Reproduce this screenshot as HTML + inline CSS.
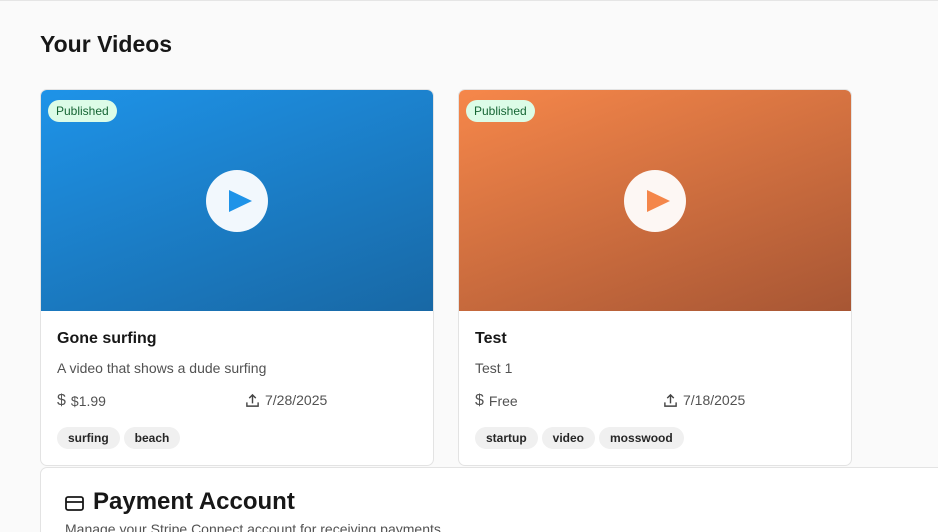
<!DOCTYPE html><html><head><style>
*{box-sizing:border-box;margin:0;padding:0}
html,body{width:938px;height:532px;overflow:hidden}
body{background:#fafafa;font-family:"Liberation Sans",sans-serif;color:#171717;position:relative}
.top{position:absolute;left:0;top:0;width:938px;height:1px;background:#e5e5e5}
h1{position:absolute;left:40px;top:31px;font-size:23px;font-weight:600}
.card{position:absolute;top:89px;width:394px;height:377px;background:#fff;border:1px solid #e3e3e3;border-radius:7px;overflow:hidden}
.thumb{height:221px;position:relative}
.badge{position:absolute;left:7px;top:10px;background:#dcfce7;color:#166534;font-size:12px;padding:4px 8px;border-radius:11px}
.play{position:absolute;left:165px;top:80px;width:62px;height:62px;border-radius:50%;background:#f2f8fd}
.play svg{position:absolute;left:22px;top:19px}
.t{position:absolute;left:16px;top:240px;font-size:16px;font-weight:600}
.d{position:absolute;left:16px;top:270px;font-size:14px;color:#525252}
.m{position:absolute;top:302px;font-size:14px;color:#525252;display:flex;align-items:center;gap:5px}
.tags{position:absolute;left:16px;top:337px;display:flex;gap:4px}
.tag{background:#f0f0f0;border-radius:11px;padding:4px 11px;font-size:12px;font-weight:600;color:#262626}
.pay{position:absolute;left:40px;top:467px;width:920px;height:100px;background:#fff;border:1px solid #e3e3e3;border-radius:7px}
.pay h2{position:absolute;left:52px;top:20px;font-size:24px;font-weight:600}
.pay p{position:absolute;left:24px;top:53px;font-size:14px;color:#525252}
</style></head><body>
<div class="top"></div>
<h1>Your Videos</h1>
<div class="card" style="left:40px">
 <div class="thumb" style="background:linear-gradient(160deg,#1e93e8,#1868a5)">
  <div class="badge">Published</div>
  <div class="play"><svg width="24" height="24" viewBox="0 0 24 24"><path d="M1 1L24 12L1 23Z" fill="#1e93e8"/></svg></div>
 </div>
 <div class="t">Gone surfing</div>
 <div class="d">A video that shows a dude surfing</div>
 <div class="m" style="left:16px"><span style="font-size:16px">$</span> $1.99</div>
 <div class="m" style="left:204px"><svg width="15" height="15" viewBox="0 0 16 16" fill="none" stroke="#444" stroke-width="1.5"><path d="M8 11V2M4.5 5.5L8 2l3.5 3.5M2 10v4h12v-4"/></svg> 7/28/2025</div>
 <div class="tags"><span class="tag">surfing</span><span class="tag">beach</span></div>
</div>
<div class="card" style="left:458px">
 <div class="thumb" style="background:linear-gradient(160deg,#f6874a,#a75634)">
  <div class="badge">Published</div>
  <div class="play" style="background:#fdf7f4"><svg width="24" height="24" viewBox="0 0 24 24"><path d="M1 1L24 12L1 23Z" fill="#f4864a"/></svg></div>
 </div>
 <div class="t">Test</div>
 <div class="d">Test 1</div>
 <div class="m" style="left:16px"><span style="font-size:16px">$</span> Free</div>
 <div class="m" style="left:204px"><svg width="15" height="15" viewBox="0 0 16 16" fill="none" stroke="#444" stroke-width="1.5"><path d="M8 11V2M4.5 5.5L8 2l3.5 3.5M2 10v4h12v-4"/></svg> 7/18/2025</div>
 <div class="tags"><span class="tag">startup</span><span class="tag">video</span><span class="tag">mosswood</span></div>
</div>
<div class="pay">
 <svg style="position:absolute;left:24px;top:28px" width="19" height="15" viewBox="0 0 19 15" fill="none" stroke="#171717" stroke-width="1.8"><rect x="1" y="1" width="17" height="13" rx="2"/><path d="M1 6h17"/></svg>
 <h2>Payment Account</h2>
 <p>Manage your Stripe Connect account for receiving payments</p>
</div>
</body></html>
